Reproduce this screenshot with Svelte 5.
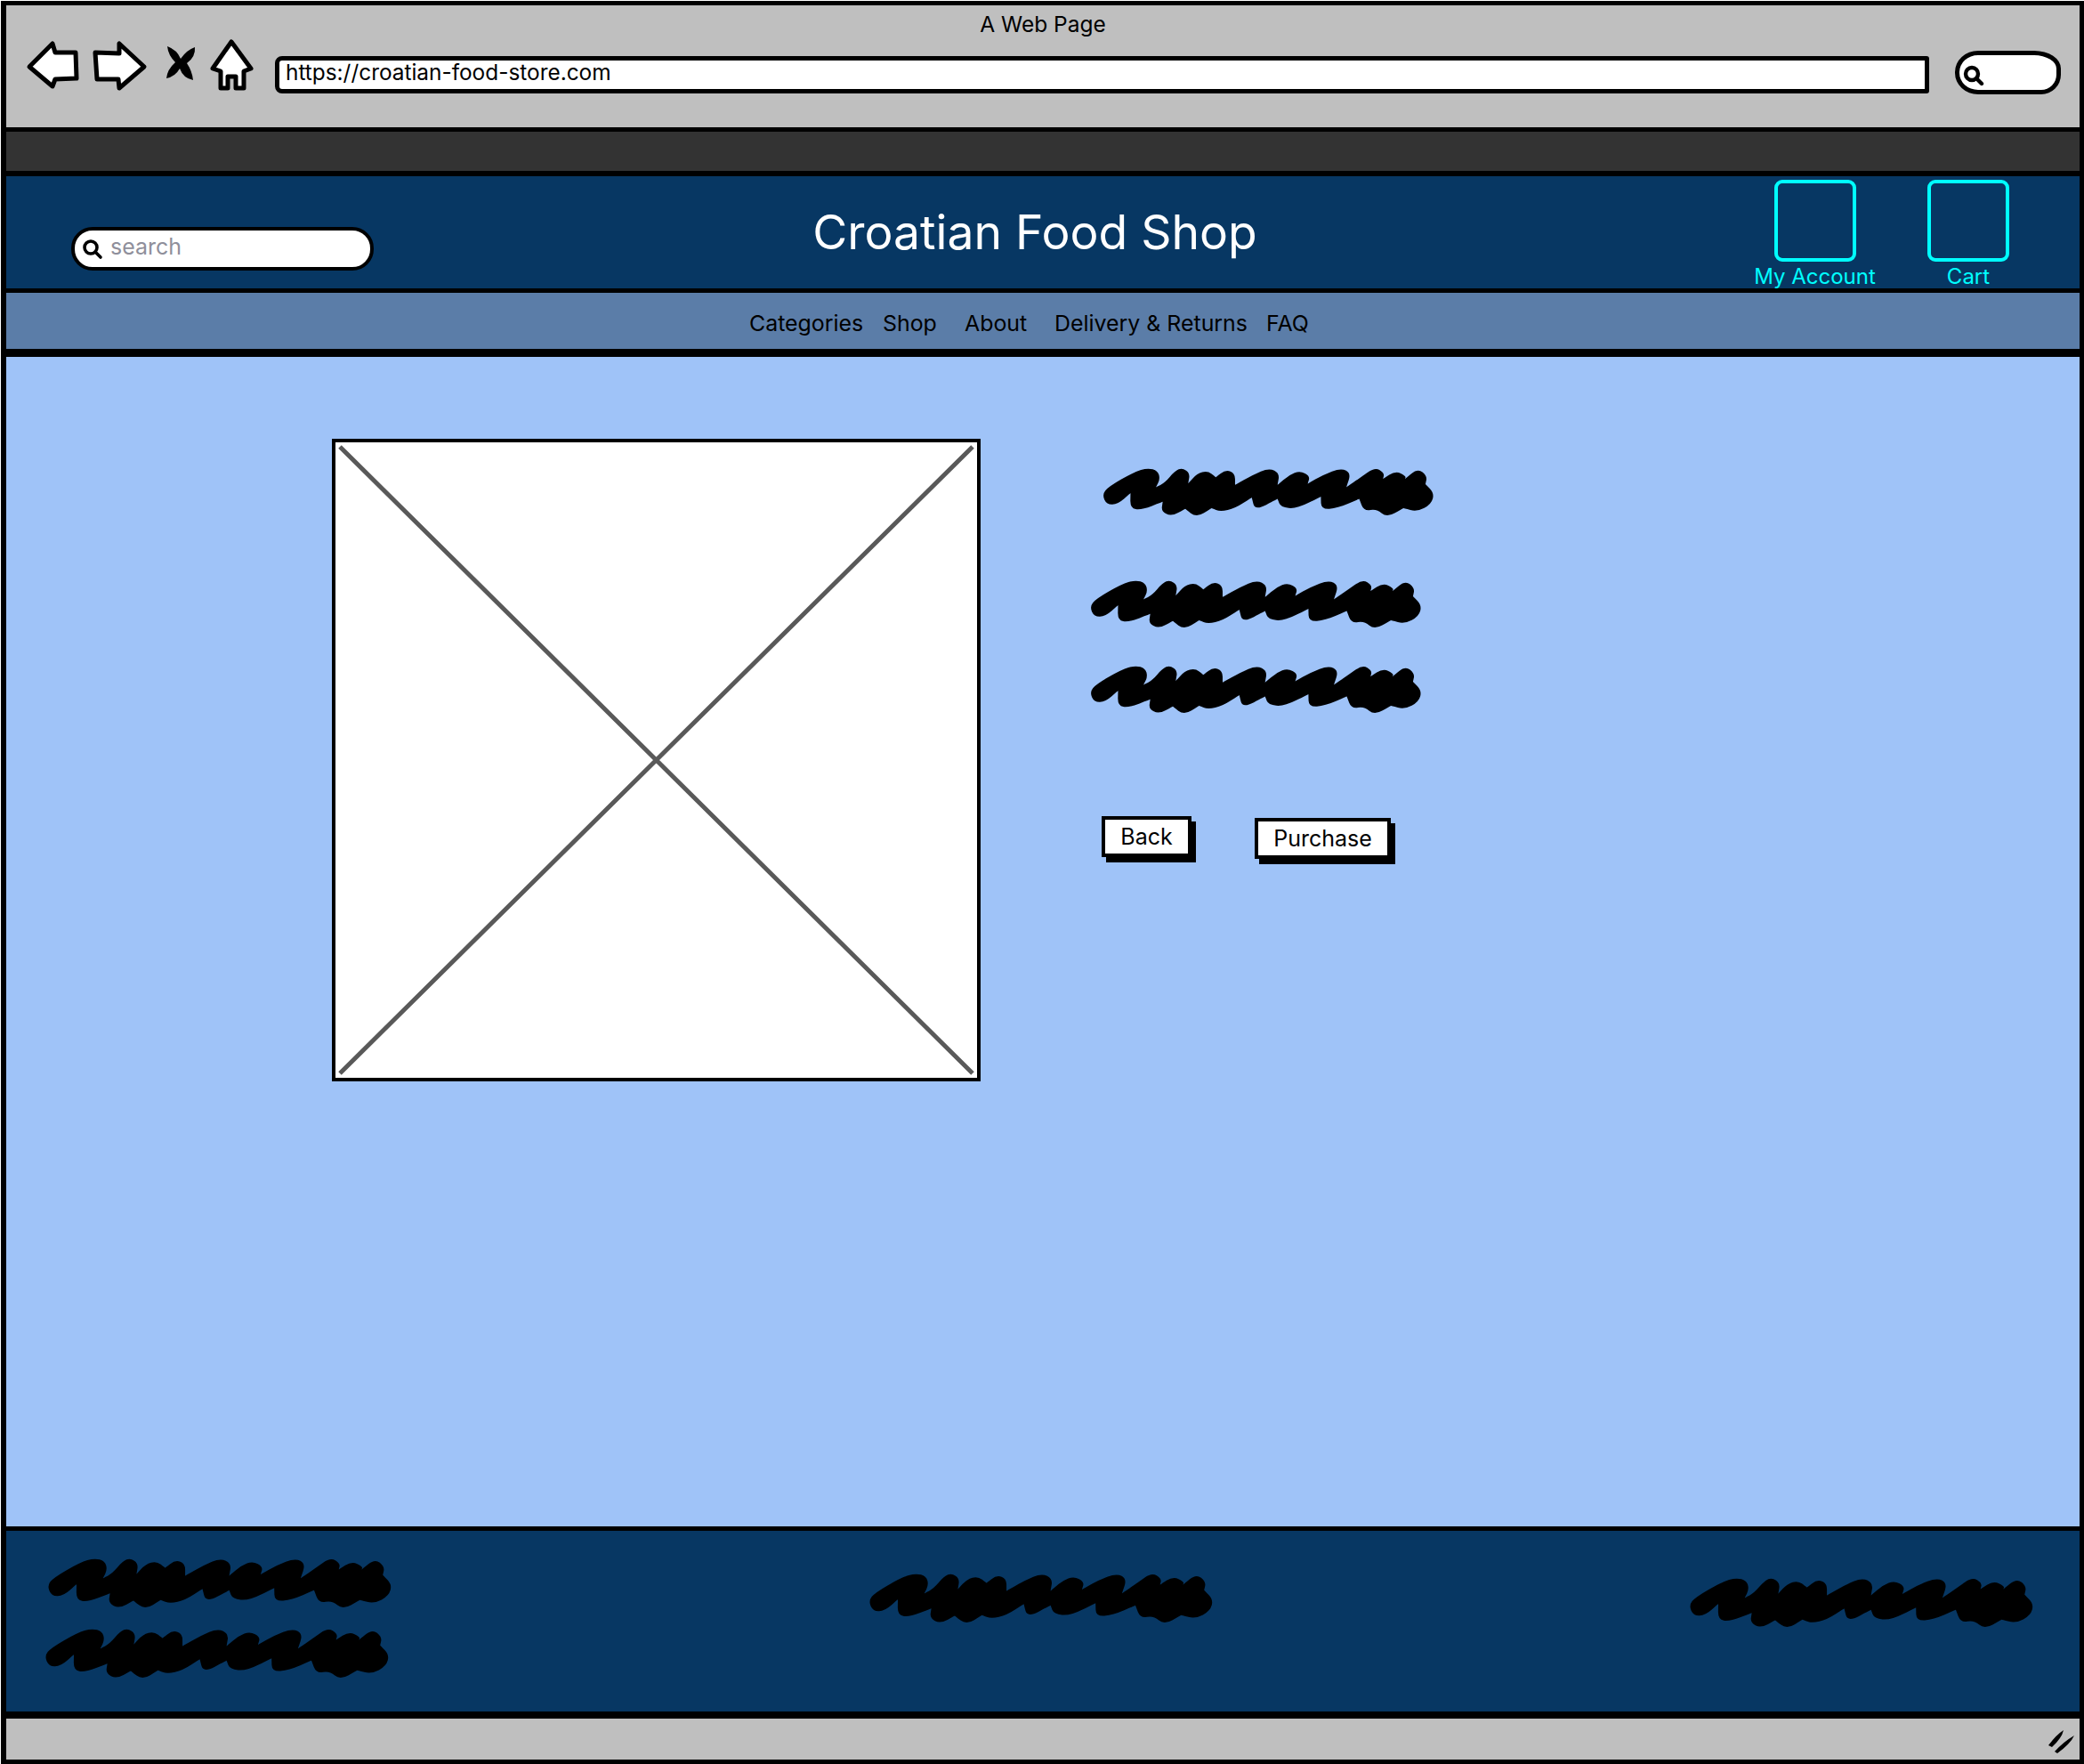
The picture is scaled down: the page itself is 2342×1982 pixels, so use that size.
<script lang="ts">
  const navItems = ["Categories", "Shop", "About", "Delivery & Returns", "FAQ"];
  const actions = ["My Account", "Cart"];

  // outline of the hand drawn scribble, a third value marks a sharp notch
  const outline = [
    [106, 165], [128, 138], [215, 88], [262, 74], [296, 84], [304, 112], [290, 140, 1],
    [320, 125], [355, 84], [380, 74], [406, 92], [400, 127, 1], [430, 94], [466, 84],
    [494, 106, 1], [528, 80], [560, 92], [560, 132, 1], [620, 98], [676, 74], [712, 92],
    [705, 132, 1], [745, 98], [782, 84], [816, 102], [808, 128, 1], [860, 98], [922, 74],
    [956, 92], [940, 140, 1], [990, 106], [1038, 72], [1070, 92], [1065, 112, 1], [1108, 84],
    [1144, 102], [1140, 112, 1], [1184, 76], [1216, 102], [1210, 130, 1], [1240, 160],
    [1230, 198], [1182, 224], [1135, 212, 1], [1078, 244], [1044, 214], [1000, 222],
    [984, 180, 1], [910, 212], [854, 216], [853, 172, 1], [770, 214], [716, 208], [705, 180, 1],
    [628, 220], [617, 175, 1], [560, 212], [510, 224], [480, 212, 1], [428, 244], [390, 214, 1],
    [342, 240], [308, 222], [313, 190, 1], [240, 218], [202, 212], [203, 160, 1], [160, 198],
    [122, 200],
  ];

  const smooth = (raw: number[][]): string => {
    // a doubled point makes the curve pass right through it
    const pts = raw.flatMap((p) => (p[2] ? [p, p] : [p]));
    const mid = (a: number[], b: number[]) => `${(a[0] + b[0]) / 2} ${(a[1] + b[1]) / 2}`;
    let d = `M${mid(pts[pts.length - 1], pts[0])}`;
    pts.forEach((p, i) => {
      d += ` Q${p[0]} ${p[1]} ${mid(p, pts[(i + 1) % pts.length])}`;
    });
    return d + " Z";
  };

  const scribblePath = smooth(outline);
</script>

{#snippet scribble(cls = "")}
  <svg class="scribble {cls}" viewBox="108 78 1126 158" aria-hidden="true">
    <path d={scribblePath} />
  </svg>
{/snippet}

<div class="frame">
  <header class="chrome">
    <div class="page-title">A Web Page</div>
    <div class="toolbar">
      <svg class="browser-icons" viewBox="28 40 258 88" aria-hidden="true">
        <path class="ico" d="M33 75 L59 49 L62 59 L85 59 L86 88 L62 89 L59 97 Z" />
        <path class="ico" d="M162 75 L134 49 L134 60 L107 59 L109 89 L133 89 L134 99 Z" />
        <path d="M188 52 Q199 56 203 66 Q210 56 219 53 Q220 64 210 71 Q216 80 217 90 Q206 88 202 77 Q197 86 187 88 Q188 78 197 70 Q189 62 188 52 Z" />
        <path class="ico" d="M260 47 L282 77 L274 80 L274 99 L265 99 L265 86 L256 86 L256 99 L248 99 L248 80 L239 77 Z" />
      </svg>
      <div class="url">https://croatian-food-store.com</div>
      <div class="mini-search">
        <svg class="lens" viewBox="0 0 24 24" aria-hidden="true">
          <circle cx="10" cy="10" r="7" />
          <path d="M15 15 L21 21" />
        </svg>
      </div>
    </div>
  </header>

  <div class="dark-bar"></div>

  <section class="site-header">
    <div class="search">
      <svg class="lens" viewBox="0 0 24 24" aria-hidden="true">
        <circle cx="10" cy="10" r="7" />
        <path d="M15 15 L21 21" />
      </svg>
      <span>search</span>
    </div>
    <h1>Croatian Food Shop</h1>
    <div class="actions">
      {#each actions as label}
        <div class="action">
          <div class="action-box"></div>
          <span>{label}</span>
        </div>
      {/each}
    </div>
  </section>

  <nav class="site-nav">
    {#each navItems as item}
      <span>{item}</span>
    {/each}
  </nav>

  <main class="content">
    <svg class="placeholder" viewBox="0 0 721 714" preserveAspectRatio="none" aria-hidden="true">
      <path d="M5 5 L716 709 M716 5 L5 709" />
    </svg>
    <div class="details">
      {@render scribble("first")}
      {@render scribble("second")}
      {@render scribble("third")}
      <div class="buttons">
        <button class="btn back">Back</button>
        <button class="btn purchase">Purchase</button>
      </div>
    </div>
  </main>

  <footer class="site-footer">
    <div class="foot-col left">
      {@render scribble("foot first-foot")}
      {@render scribble("foot second-foot")}
    </div>
    <div class="foot-col middle">
      {@render scribble("foot")}
    </div>
    <div class="foot-col right">
      {@render scribble("foot")}
    </div>
  </footer>

  <div class="status">
    <svg class="grip" viewBox="0 0 32 28" aria-hidden="true">
      <path d="M1 18 Q10 6 18 1 Q16 10 5 20 Z M8 25 Q18 14 30 7 Q26 16 11 27 Z" />
    </svg>
  </div>
</div>

<style>
  :global(body) {
    background: #fff;
  }

  .frame {
    box-sizing: border-box;
    width: 2341px;
    height: 1981px;
    margin: 1px 0 0 1px;
    border: 5px solid #000;
    border-left-width: 6px;
    display: flex;
    flex-direction: column;
    font-family: Inter, Lato, sans-serif;
    font-variant-ligatures: none;
    color: #000;
  }

  .chrome {
    height: 137px;
    flex: none;
    background: #bfbfbf;
    border-bottom: 5px solid #000;
  }

  .page-title {
    padding-top: 8px;
    height: 35px;
    box-sizing: border-box;
    text-align: center;
    font-size: 24.5px;
    line-height: 26px;
  }

  .toolbar {
    display: flex;
    align-items: center;
    margin-top: 18px;
    height: 50px;
    padding-left: 21px;
  }

  .browser-icons {
    width: 258px;
    height: 88px;
    flex: none;
    margin-right: 23px;
  }

  .ico {
    fill: #fff;
    stroke: #000;
    stroke-width: 5;
    stroke-linejoin: round;
  }

  .url {
    box-sizing: border-box;
    width: 1859px;
    height: 42px;
    flex: none;
    border: 5px solid #000;
    border-radius: 8px 3px 3px 8px;
    background: #fff;
    padding-left: 7px;
    font-size: 24.4px;
    line-height: 27px;
    white-space: nowrap;
  }

  .mini-search {
    box-sizing: border-box;
    width: 119px;
    height: 49px;
    flex: none;
    margin: -5px 0 0 29px;
    border: 5px solid #000;
    border-radius: 26px 30px 22px 26px / 24px 20px 22px 24px;
    background: #fff;
    display: flex;
    align-items: center;
    padding-left: 4px;
  }

  .mini-search .lens {
    margin-top: 6px;
    stroke-width: 4.4;
  }

  .lens {
    width: 24px;
    height: 24px;
    flex: none;
    fill: none;
    stroke: #000;
    stroke-width: 3.6;
    stroke-linecap: round;
  }

  .dark-bar {
    height: 44px;
    flex: none;
    background: #333;
    border-bottom: 6px solid #000;
  }

  .site-header {
    height: 126px;
    flex: none;
    background: #073763;
    border-bottom: 5px solid #000;
    display: grid;
    grid-template-columns: 1fr auto 1fr;
  }

  .search {
    box-sizing: border-box;
    width: 340px;
    height: 49px;
    margin: 57px 0 0 73px;
    border: 4px solid #000;
    border-radius: 24px;
    background: #fff;
    display: flex;
    align-items: center;
    gap: 8px;
    padding: 0 0 5px 8px;
    color: #8f8f9b;
    font-size: 25px;
  }

  .search .lens {
    margin-top: 5px;
  }

  h1 {
    margin: 0;
    padding: 33px 0 0;
    color: #fff;
    font-size: 53.4px;
    font-weight: 400;
    line-height: 60px;
    transform: translateX(-9px);
  }

  .actions {
    display: flex;
    justify-content: flex-end;
    gap: 60px;
    padding: 4px 79px 0 0;
  }

  .action {
    width: 133px;
    display: flex;
    flex-direction: column;
    align-items: center;
    color: #0ff;
    font-size: 24px;
    line-height: 30px;
    white-space: nowrap;
  }

  .action + .action {
    width: 92px;
  }

  .action-box {
    box-sizing: border-box;
    width: 92px;
    height: 92px;
    border: 4px solid #0ff;
    border-radius: 9px;
    margin-bottom: 2px;
  }

  .site-nav {
    box-sizing: content-box;
    height: 58px;
    flex: none;
    background: #5b7da8;
    border-bottom: 9px solid #000;
    display: grid;
    grid-template-columns: 150px 92px 101px 238px auto;
    align-items: center;
    padding: 5px 0 0 835px;
    font-size: 24.9px;
    white-space: nowrap;
  }

  .content {
    flex: 1;
    min-height: 0;
    background: #9fc3f8;
    border-bottom: 5px solid #000;
    display: flex;
    align-items: flex-start;
    padding: 92px 0 0 366px;
  }

  .placeholder {
    box-sizing: border-box;
    width: 729px;
    height: 722px;
    flex: none;
    border: 4px solid #000;
    background: #fff;
    fill: none;
    stroke: #595959;
    stroke-width: 5;
  }

  .details {
    margin-left: 121px;
    padding-top: 34px;
    display: flex;
    flex-direction: column;
    align-items: flex-start;
  }

  .scribble {
    display: block;
    width: 375px;
    height: 52px;
    flex: none;
    fill: #000;
    overflow: visible;
  }

  .scribble.first {
    margin-left: 14px;
  }

  .scribble.second {
    margin-top: 74px;
  }

  .scribble.third {
    margin-top: 44px;
  }

  .buttons {
    display: flex;
    align-items: flex-start;
    gap: 71px;
    margin: 116px 0 0 15px;
  }

  .btn {
    box-sizing: border-box;
    height: 46px;
    padding: 0;
    border: 4px solid #000;
    background: #fff;
    box-shadow: 5px 6px 0 #000;
    font: inherit;
    font-size: 25px;
    color: #000;
  }

  .back {
    width: 101px;
  }

  .purchase {
    width: 153px;
    margin-top: 2px;
  }

  .site-footer {
    height: 203px;
    flex: none;
    background: #073763;
    border-bottom: 8px solid #000;
    display: grid;
    grid-template-columns: 926px 922px 1fr;
    padding-left: 42px;
  }

  .foot-col {
    display: flex;
    flex-direction: column;
  }

  .scribble.foot {
    width: 388px;
    height: 54px;
  }

  .left {
    padding-top: 32px;
  }

  .scribble.first-foot {
    margin-left: 3px;
  }

  .scribble.second-foot {
    margin-top: 25px;
  }

  .middle {
    padding-top: 49px;
  }

  .right {
    padding-top: 54px;
  }

  .status {
    box-sizing: border-box;
    height: 46px;
    flex: none;
    background: #bfbfbf;
    display: flex;
    justify-content: flex-end;
    align-items: flex-end;
    padding: 0 4px 6px 0;
  }

  .grip {
    width: 32px;
    height: 28px;
    fill: #000;
  }
</style>
